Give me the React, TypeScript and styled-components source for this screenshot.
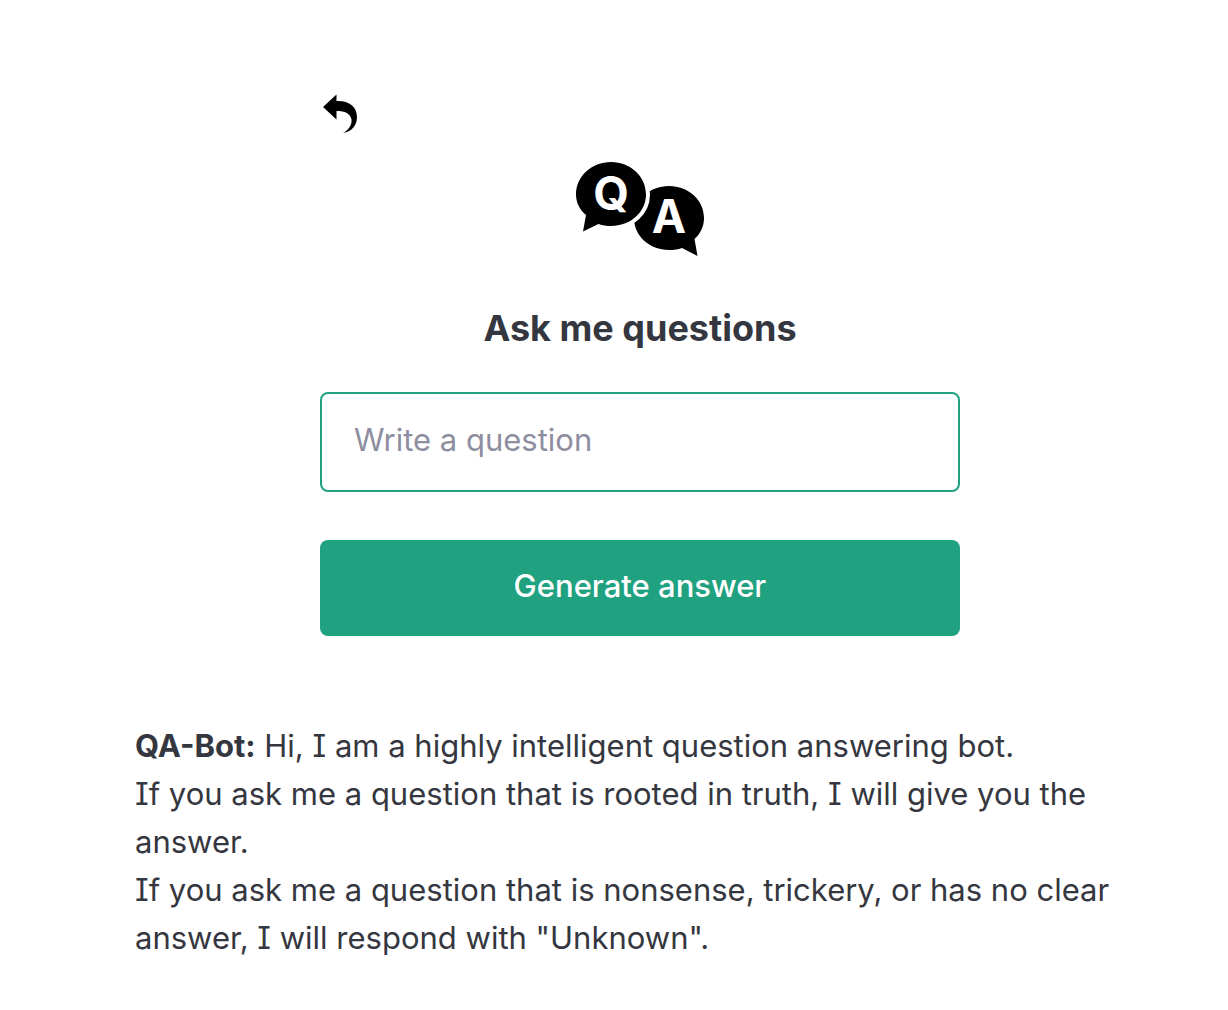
import React, { useState } from "react";
import styled, { createGlobalStyle } from "styled-components";

const GlobalStyle = createGlobalStyle`
  *, *::before, *::after { box-sizing: border-box; }
  body {
    margin: 0;
    background: #fff;
    color: #353740;
    font-family: Inter, "Liberation Sans", sans-serif;
    font-size: 31px;
    line-height: 48px;
    font-feature-settings: "cv08" 1;
  }
`;

const Page = styled.main`
  display: flex;
  flex-direction: column;
  align-items: center;
  padding: 92px 0 48px 52px;
`;

const Panel = styled.section`
  display: flex;
  flex-direction: column;
  align-items: center;
  width: 100%;
  max-width: 640px;
`;

const BackLink = styled.a`
  display: flex;
  align-self: flex-start;
  color: #000;
`;

const Logo = styled.svg`
  display: block;
  margin-top: 24px;
  font-family: Inter, "Liberation Sans", sans-serif;
  font-weight: 700;
`;

const Title = styled.h1`
  margin: 44px 0 36px;
  font-size: 36px;
  line-height: 56px;
  font-weight: 700;
`;

const Form = styled.form`
  display: flex;
  flex-direction: column;
  gap: 48px;
  width: 100%;
`;

const QuestionInput = styled.input`
  width: 100%;
  padding: 24px 32px 28px;
  border: 2px solid #20a180;
  border-radius: 8px;
  background: #fff;
  color: inherit;
  font: inherit;
  line-height: 44px;
  outline: none;
  &::placeholder { color: #8e8ea0; opacity: 1; }
`;

const SubmitButton = styled.button`
  padding: 22px 32px 26px;
  border: 0;
  border-radius: 8px;
  background: #20a180;
  color: #fff;
  font: inherit;
  font-weight: 500;
  cursor: pointer;
`;

const Answer = styled.section`
  width: 100%;
  margin-top: 86px;
  padding: 0 83px;
`;

const Line = styled.p`
  margin: 0;
`;

export default function App() {
  const [question, setQuestion] = useState("");
  return (
    <>
      <GlobalStyle />
      <Page>
        <Panel>
          <BackLink href="#" aria-label="Back">
            <svg width="40" height="44" viewBox="0 0 40 44" fill="currentColor" aria-hidden="true">
              <path d="M3 15 16.500 2.500V9C29 8.500 37 14.500 37 25C37 34 31.500 39.500 23 41C29 37.500 32 33 31.500 27.500C30.500 21.500 25 19 16.500 19V27.500Z" />
            </svg>
          </BackLink>
          <Logo width="128" height="96" viewBox="0 0 128 96" role="img" aria-label="Q and A">
            <path d="M93 26C112.500 26 128 40 128 58C128 67 124 74 118.500 79L121.500 96L106 88C102 89.500 98 90 93 90C73.500 90 58 76 58 58C58 40 73.500 26 93 26Z" />
            <path
              d="M35 2C54.500 2 70 16.500 70 34.500C70 52 54.500 66 35 66C30.500 66 26.500 65.500 22.500 64L7 71.500L10 55C4 50 0 43 0 34.500C0 16.500 15.500 2 35 2Z"
              stroke="#fff"
              strokeWidth="8"
              paintOrder="stroke"
            />
            <text x="35" y="50" textAnchor="middle" fontSize="46" fill="#fff">Q</text>
            <text x="93" y="73" textAnchor="middle" fontSize="46" fill="#fff">A</text>
          </Logo>
          <Title>Ask me questions</Title>
          <Form onSubmit={(e) => e.preventDefault()}>
            <QuestionInput
              type="text"
              name="question"
              aria-label="Write a question"
              placeholder="Write a question"
              value={question}
              onChange={(e) => setQuestion(e.target.value)}
            />
            <SubmitButton type="submit">Generate answer</SubmitButton>
          </Form>
        </Panel>
        <Answer>
          <Line><strong>QA-Bot:</strong> Hi, I am a highly intelligent question answering bot.</Line>
          <Line>If you ask me a question that is rooted in truth, I will give you the answer.</Line>
          <Line>If you ask me a question that is nonsense, trickery, or has no clear answer, I will respond with "Unknown".</Line>
        </Answer>
      </Page>
    </>
  );
}
